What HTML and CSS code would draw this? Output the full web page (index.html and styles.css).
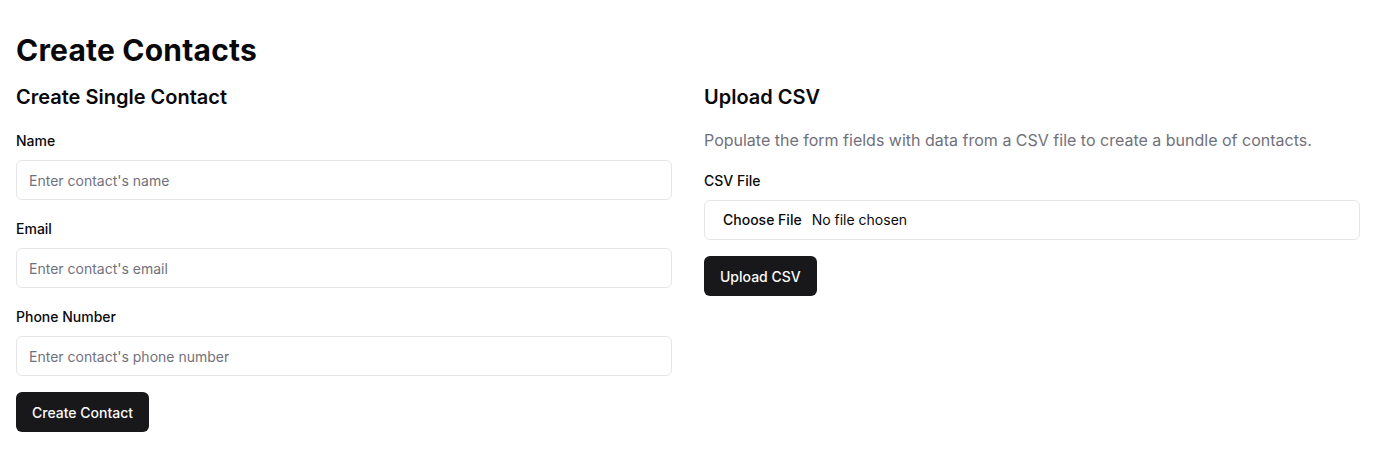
FILE: index.html
```html
<!DOCTYPE html>
<html lang="en">
<head>
<meta charset="utf-8">
<title>Create Contacts</title>
<link rel="stylesheet" href="styles.css">
</head>
<body>
<main class="page">
  <h1 class="title">Create Contacts</h1>
  <div class="columns">
    <section class="col">
      <h2 class="subtitle">Create Single Contact</h2>
      <form class="form form-single">
        <div class="field">
          <label class="label" for="name">Name</label>
          <input class="input" id="name" type="text" placeholder="Enter contact's name">
        </div>
        <div class="field">
          <label class="label" for="email">Email</label>
          <input class="input" id="email" type="email" placeholder="Enter contact's email">
        </div>
        <div class="field">
          <label class="label" for="phone">Phone Number</label>
          <input class="input" id="phone" type="tel" placeholder="Enter contact's phone number">
        </div>
        <div class="actions">
          <button class="btn" type="button">Create Contact</button>
        </div>
      </form>
    </section>
    <section class="col">
      <h2 class="subtitle">Upload CSV</h2>
      <p class="desc">Populate the form fields with data from a CSV file to create a bundle of contacts.</p>
      <form class="form">
        <div class="field">
          <label class="label" for="csv">CSV File</label>
          <input class="input file" id="csv" type="file" accept=".csv">
        </div>
        <div class="actions">
          <button class="btn" type="button">Upload CSV</button>
        </div>
      </form>
    </section>
  </div>
</main>
</body>
</html>
```

FILE: styles.css
```css
* { box-sizing: border-box; }
html, body { margin: 0; padding: 0; background: #ffffff; }
body {
  font-family: Inter, "Noto Sans", "Liberation Sans", sans-serif;
  color: #09090b;
}
.page {
  padding: 32px 16px 16px;
}
.title {
  margin: 0 0 15px;
  font-size: 30px;
  line-height: 36px;
  font-weight: 700;
  letter-spacing: 0.2px;
}
.columns {
  display: grid;
  grid-template-columns: 1fr 1fr;
  gap: 32px;
}
.col {
  display: flex;
  flex-direction: column;
}
.subtitle {
  margin: 0 0 17px;
  font-size: 20px;
  line-height: 28px;
  font-weight: 600;
}
.desc {
  margin: 0 0 19px;
  font-size: 16px;
  line-height: 24px;
  color: #71717a;
}
.form {
  display: flex;
  flex-direction: column;
  gap: 19px;
}
.form-single { padding-top: 3px; }
.field {
  display: flex;
  flex-direction: column;
  gap: 9px;
}
.label {
  font-size: 14px;
  line-height: 20px;
  font-weight: 500;
}
.input {
  height: 40px;
  width: 100%;
  border: 1px solid #e4e4e7;
  border-radius: 6px;
  padding: 8px 12px;
  font-family: inherit;
  font-size: 14px;
  color: #09090b;
  background: #ffffff;
  outline: none;
}
.input::placeholder { color: #71717a; }
.file { padding: 8px 12px; line-height: 22px; }
.file::file-selector-button {
  border: 0;
  background: transparent;
  font-family: inherit;
  font-size: 14px;
  font-weight: 500;
  color: #09090b;
  padding: 0 6px;
  margin-right: 4px;
}
.actions { margin-top: -3px; }
.btn {
  height: 40px;
  padding: 0 16px;
  border: 0;
  border-radius: 6px;
  background: #18181b;
  color: #fafafa;
  font-family: inherit;
  font-size: 14px;
  font-weight: 500;
}
```
